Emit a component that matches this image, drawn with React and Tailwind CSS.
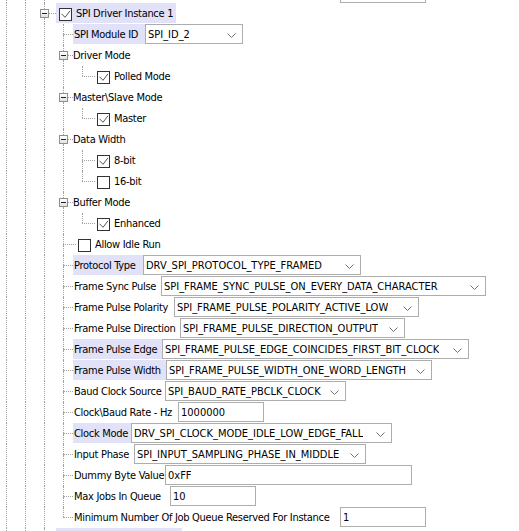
import React from 'react'

const Guide = () => (
  <div className="h-full w-[19px] shrink-0 pl-[6px]">
    <div className="h-full border-l border-dotted border-[#a0a0a0]" />
  </div>
)

const Branch = ({ last, wide }) => (
  <div className={`flex h-full shrink-0 flex-col pl-[6px] ${wide ? 'w-[19px]' : 'w-[16px]'}`}>
    <div className="h-[10px] border-l border-dotted border-[#a0a0a0]" />
    <div className="border-t border-dotted border-[#a0a0a0]" />
    {!last && <div className="flex-1 border-l border-dotted border-[#a0a0a0]" />}
  </div>
)

const Expander = ({ top }) => (
  <div className={`flex h-full shrink-0 pl-[2px] ${top ? 'w-[18px]' : 'w-[16px]'}`}>
    <div className="flex w-[9px] flex-col">
      <div className="ml-[4px] h-[6px] border-l border-dotted border-[#a0a0a0]" />
      <div className="flex h-[9px] w-[9px] items-center justify-center border border-[#8f8f8f] bg-linear-to-b from-white to-[#e2e2e2]">
        <div className="h-px w-[5px] bg-[#222]" />
      </div>
      <div className="ml-[4px] flex-1 border-l border-dotted border-[#a0a0a0]" />
    </div>
    <div className="mt-[10px] h-0 flex-1 border-t border-dotted border-[#a0a0a0]" />
  </div>
)

const Check = ({ checked }) => (
  <span className="flex h-[13px] w-[13px] shrink-0 items-center justify-center border border-[#333] bg-white">
    {checked && (
      <svg width="11" height="11" viewBox="0 0 11 11">
        <path d="M1.5 4.8 L5 8.3 L10 1.8" fill="none" stroke="#555" strokeWidth="1" />
      </svg>
    )}
  </span>
)

const Chevron = () => (
  <svg width="9" height="5" viewBox="0 0 9 5" className="ml-auto shrink-0">
    <path d="M0.5 0.5 L4.5 4.5 L8.5 0.5" fill="none" stroke="#707070" />
  </svg>
)

const Row = ({ children }) => <div className="flex h-[21px]">{children}</div>

const CheckItem = ({ label, checked, hl, top }) => (
  <div className={`flex h-[20px] items-center pt-[2px] pr-[3px] ${top ? 'pl-[3px]' : 'pl-[2px]'} ${hl ? 'bg-[#e1e1f8]' : ''}`}>
    <Check checked={checked} />
    <span className="ml-[4px] whitespace-nowrap tracking-[-0.3px]">{label}</span>
  </div>
)

const Field = ({ label, lw, value, bw, select, hl }) => (
  <div className="flex h-[20px]">
    <div
      className={`flex h-full shrink-0 items-center overflow-hidden whitespace-nowrap pt-[2px] pl-[1px] tracking-[-0.3px] ${hl ? 'bg-[#e1e1f8]' : ''}`}
      style={{ width: lw }}
    >
      {label}
    </div>
    <div
      className="flex h-full shrink-0 items-center border border-[#adadad] bg-white pt-[2px] pl-[2px] pr-[6px]"
      style={{ width: bw }}
    >
      <span className="overflow-hidden whitespace-nowrap">{value}</span>
      {select && <Chevron />}
    </div>
  </div>
)

const fields = [
  { label: 'Protocol Type', lw: 70, value: 'DRV_SPI_PROTOCOL_TYPE_FRAMED', bw: 218, select: true, hl: true },
  { label: 'Frame Sync Pulse', lw: 88, value: 'SPI_FRAME_SYNC_PULSE_ON_EVERY_DATA_CHARACTER', bw: 325, select: true },
  { label: 'Frame Pulse Polarity', lw: 101, value: 'SPI_FRAME_PULSE_POLARITY_ACTIVE_LOW', bw: 245, select: true },
  { label: 'Frame Pulse Direction', lw: 107, value: 'SPI_FRAME_PULSE_DIRECTION_OUTPUT', bw: 225, select: true },
  { label: 'Frame Pulse Edge', lw: 89, value: 'SPI_FRAME_PULSE_EDGE_COINCIDES_FIRST_BIT_CLOCK', bw: 307, select: true, hl: true },
  { label: 'Frame Pulse Width', lw: 93, value: 'SPI_FRAME_PULSE_WIDTH_ONE_WORD_LENGTH', bw: 266, select: true, hl: true },
  { label: 'Baud Clock Source', lw: 92, value: 'SPI_BAUD_RATE_PBCLK_CLOCK', bw: 181, select: true },
  { label: 'Clock\\Baud Rate - Hz', lw: 105, value: '1000000', bw: 86 },
  { label: 'Clock Mode', lw: 58, value: 'DRV_SPI_CLOCK_MODE_IDLE_LOW_EDGE_FALL', bw: 261, select: true, hl: true },
  { label: 'Input Phase', lw: 61, value: 'SPI_INPUT_SAMPLING_PHASE_IN_MIDDLE', bw: 232, select: true },
  { label: 'Dummy Byte Value', lw: 92, value: '0xFF', bw: 247 },
  { label: 'Max Jobs In Queue', lw: 97, value: '10', bw: 86 },
  { label: 'Minimum Number Of Job Queue Reserved For Instance', lw: 267, value: '1', bw: 86 },
]

const groups = [
  { label: 'Driver Mode', items: [{ label: 'Polled Mode', checked: true }] },
  { label: 'Master\\Slave Mode', items: [{ label: 'Master', checked: true }] },
  { label: 'Data Width', items: [{ label: '8-bit', checked: true }, { label: '16-bit', checked: false }] },
  { label: 'Buffer Mode', items: [{ label: 'Enhanced', checked: true }] },
]

export default function App() {
  return (
    <div className="h-[531px] w-[519px] overflow-hidden bg-white font-['DejaVu_Sans_Condensed','Liberation_Sans',sans-serif] text-[11px] text-black">
      {/* tail of the row above */}
      <div className="flex h-[3px]">
        <Guide />
        <Guide />
        <Guide />
        <div className="ml-[283px] h-[3px] w-[86px] border border-t-0 border-[#adadad]" />
      </div>

      <Row>
        <Guide />
        <Guide />
        <Expander top />
        <CheckItem label="SPI Driver Instance 1" checked hl top />
      </Row>

      <Row>
        <Guide />
        <Guide />
        <Guide />
        <Branch />
        <Field label="SPI Module ID" lw={72} value="SPI_ID_2" bw={98} select hl />
      </Row>

      {groups.map((g) => (
        <React.Fragment key={g.label}>
          <Row>
            <Guide />
            <Guide />
            <Guide />
            <Expander />
            <div className="flex h-[20px] items-center whitespace-nowrap pt-[2px] tracking-[-0.3px]">{g.label}</div>
          </Row>
          {g.items.map((it, i) => (
            <Row key={it.label}>
              <Guide />
              <Guide />
              <Guide />
              <Guide />
              <Branch wide last={i === g.items.length - 1} />
              <CheckItem label={it.label} checked={it.checked} />
            </Row>
          ))}
        </React.Fragment>
      ))}

      <Row>
        <Guide />
        <Guide />
        <Guide />
        <Branch wide />
        <CheckItem label="Allow Idle Run" checked={false} />
      </Row>

      {fields.map((f, i) => (
        <Row key={f.label}>
          <Guide />
          <Guide />
          <Guide />
          <Branch last={i === fields.length - 1} />
          <Field {...f} />
        </Row>
      ))}

      {/* next instance, only its top edge shows */}
      <Row>
        <Guide />
        <Guide />
        <Expander top />
        <div className="h-[20px] w-[126px] bg-[#e1e1f8]" />
      </Row>
    </div>
  )
}
